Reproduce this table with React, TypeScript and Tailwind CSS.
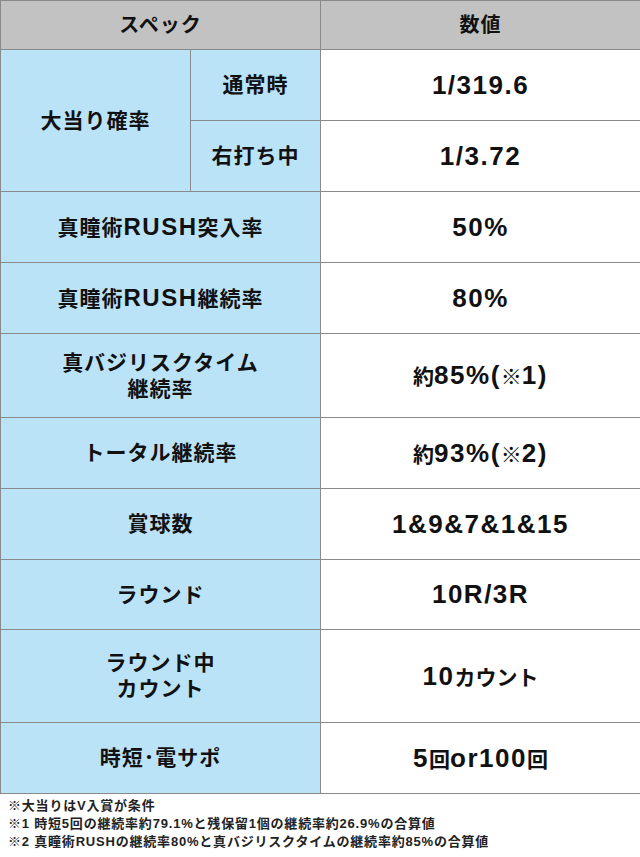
const rows: { label: string[]; value: string; h: string }[] = [
  { label: ['真瞳術RUSH突入率'], value: '50%', h: 'h-[71px]' },
  { label: ['真瞳術RUSH継続率'], value: '80%', h: 'h-[71px]' },
  { label: ['真バジリスクタイム', '継続率'], value: '約85%(※1)', h: 'h-[84px]' },
  { label: ['トータル継続率'], value: '約93%(※2)', h: 'h-[71px]' },
  { label: ['賞球数'], value: '1&9&7&1&15', h: 'h-[71px]' },
  { label: ['ラウンド'], value: '10R/3R', h: 'h-[70px]' },
  { label: ['ラウンド中', 'カウント'], value: '10カウント', h: 'h-[93px]' },
  { label: ['時短･電サポ'], value: '5回or100回', h: 'h-[71px]' },
]

const cell = 'border border-[#8a8a8a] text-center align-middle'
const blue = 'bg-[#bbe3f8] text-[21px] leading-[26px] tracking-[1px]'
const val = 'bg-white text-[26px] tracking-[1.5px]'

const isWide = (s: string) => /[^\x00-\x7F]/.test(s)

// kana/kanji in the value column are set a bit smaller than the digits
function Value({ text }: { text: string }) {
  return (
    <>
      {text.split(/([^\x00-\x7F]+)/).map((p, i) =>
        isWide(p) ? (
          <span key={i} className="text-[21px] tracking-[0px]">
            {p}
          </span>
        ) : (
          <span key={i}>{p}</span>
        ),
      )}
    </>
  )
}

// latin letters in the labels are a size up
function Label({ text }: { text: string }) {
  return (
    <div>
      {text.split(/([A-Z]+)/).map((p, i) =>
        /^[A-Z]+$/.test(p) ? (
          <span key={i} className="text-[24px] tracking-[1.5px]">
            {p}
          </span>
        ) : (
          <span key={i}>{p}</span>
        ),
      )}
    </div>
  )
}

export default function App() {
  return (
    <div className="w-[640px] bg-white text-[#111] font-['Liberation_Sans','Noto_Sans_CJK_JP',sans-serif] font-bold">
      <table className="w-[640px] table-fixed border-collapse">
        <colgroup>
          <col className="w-[190px]" />
          <col className="w-[130px]" />
          <col className="w-[320px]" />
        </colgroup>
        <tbody>
          <tr className="h-[49px] bg-[#c2c2c2] text-[20px] tracking-[1px]">
            <td colSpan={2} className={cell}>スペック</td>
            <td className={cell}>数値</td>
          </tr>
          <tr className="h-[71px]">
            <td rowSpan={2} className={`${cell} ${blue}`}>大当り確率</td>
            <td className={`${cell} ${blue}`}>通常時</td>
            <td className={`${cell} ${val}`}>
              <Value text="1/319.6" />
            </td>
          </tr>
          <tr className="h-[71px]">
            <td className={`${cell} ${blue}`}>右打ち中</td>
            <td className={`${cell} ${val}`}>
              <Value text="1/3.72" />
            </td>
          </tr>
          {rows.map((r) => (
            <tr key={r.value} className={r.h}>
              <td colSpan={2} className={`${cell} ${blue}`}>
                {r.label.map((l) => (
                  <Label key={l} text={l} />
                ))}
              </td>
              <td className={`${cell} ${val}`}>
                <Value text={r.value} />
              </td>
            </tr>
          ))}
        </tbody>
      </table>
      <div className="px-[8px] pt-[3px] text-[13px] leading-[18px] tracking-[0.8px] text-[#222]">
        <p>※大当りはV入賞が条件</p>
        <p>※1 時短5回の継続率約79.1%と残保留1個の継続率約26.9%の合算値</p>
        <p>※2 真瞳術RUSHの継続率80%と真バジリスクタイムの継続率約85%の合算値</p>
      </div>
    </div>
  )
}
